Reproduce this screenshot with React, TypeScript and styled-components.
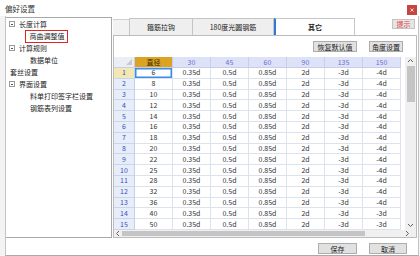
import React from 'react';
import styled, { createGlobalStyle } from 'styled-components';

const Global = createGlobalStyle`
  html, body { margin: 0; padding: 0; background: #f3f3f3; }
  body { font-family: "Noto Sans CJK SC", "Noto Sans", sans-serif; }
  * { box-sizing: border-box; }
`;

const Window = styled.div`
  width: 420px;
  height: 256px;
  display: flex;
  flex-direction: column;
  background: #f3f3f3;
  overflow: hidden;
  color: #222;
`;

const TitleBar = styled.div`
  height: 16px;
  flex: none;
  background: #fff;
  display: flex;
  align-items: flex-start;
  justify-content: space-between;
  padding: 4px 3px 0 5px;
`;

const Title = styled.span`
  font-size: 7.5px;
  line-height: 10px;
  color: #333;
`;

const CloseBtn = styled.div`
  width: 10px;
  height: 10px;
  margin-top: 1px;
  background: #c8443e;
  display: flex;
  align-items: center;
  justify-content: center;
`;

const Main = styled.div`
  flex: 1;
  margin: 0 1px 0 5px;
  background: #fff;
  border-left: 1px solid #c3c3c3;
  border-right: 1px solid #c3c3c3;
  border-bottom: 1px solid #a9a9a9;
  display: flex;
  flex-direction: column;
`;

const Body = styled.div`
  height: 222px;
  flex: none;
  display: flex;
  gap: 1px;
`;

const Tree = styled.div`
  width: 106px;
  height: 221px;
  margin-top: 1px;
  border: 1px solid #a8a8a8;
  border-left: none;
  background: #fff;
  padding-top: 0px;
  display: flex;
  flex-direction: column;
`;

const TreeRow = styled.div<{ $indent: number }>`
  height: 12px;
  display: flex;
  align-items: center;
  gap: 4px;
  padding-left: ${(p) => p.$indent}px;
  font-size: 7px;
  line-height: 12px;
  color: #222;
  white-space: nowrap;
`;

const Expander = styled.span`
  width: 6px;
  height: 6px;
  border: 1px solid #9a9a9a;
  position: relative;
  flex: none;
  &::after {
    content: '';
    position: absolute;
    left: 1px;
    right: 1px;
    top: 1.5px;
    height: 1px;
    background: #555;
  }
`;

const Highlight = styled.span`
  border: 1.5px solid #e3231d;
  padding: 0 2px 0 3.5px;
  margin-left: -5px;
  line-height: 10px;
  height: 13px;
  display: inline-flex;
  align-items: center;
`;

const RightCol = styled.div`
  width: 305px;
  display: flex;
  flex-direction: column;
  padding-top: 2px;
`;

const TabStrip = styled.div`
  height: 17px;
  flex: none;
  display: flex;
`;

const TabSpacer = styled.div`
  width: 17px;
  margin-top: 1px;
  background: #f2f2f2;
  border-top: 1px solid #d0d0d0;
`;

const Tab = styled.div<{ $w: number; $active?: boolean }>`
  width: ${(p) => p.$w}px;
  display: flex;
  align-items: center;
  justify-content: center;
  font-size: 7px;
  font-weight: ${(p) => (p.$active ? 700 : 400)};
  color: #222;
  background: ${(p) => (p.$active ? '#fff' : '#efefef')};
  border-top: 1px solid #c5c5c5;
  border-right: 1px solid #c5c5c5;
  border-left: ${(p) => (p.$active ? '2px solid #2d7bd8' : '1px solid #c5c5c5')};
  margin-left: ${(p) => (p.$active ? 0 : -1)}px;
`;

const HintBtn = styled.div`
  margin-left: auto;
  margin-right: 3px;
  margin-top: 1px;
  width: 23px;
  height: 10px;
  background: #e5e5e5;
  border: 1px solid #c4c4c4;
  color: #e23a36;
  font-size: 7px;
  display: flex;
  align-items: center;
  justify-content: center;
`;

const Content = styled.div`
  height: 203px;
  margin-right: 1px;
  border: 1px solid #bcbcbc;
  background: #fff;
  display: flex;
  flex-direction: column;
`;

const ButtonRow = styled.div`
  height: 21px;
  flex: none;
  display: flex;
  justify-content: flex-end;
  gap: 12px;
  padding: 5px 13px 0 0;
`;

const Button = styled.div<{ $w: number }>`
  width: ${(p) => p.$w}px;
  height: 11px;
  background: #e1e1e1;
  border: 1px solid #adadad;
  font-size: 7px;
  color: #222;
  display: flex;
  align-items: center;
  justify-content: center;
`;

const GridArea = styled.div`
  flex: 1;
  display: grid;
  grid-template-columns: 1fr 11px;
  grid-template-rows: 173px 7px;
`;

const Table = styled.div`
  display: grid;
  grid-template-columns: 21px repeat(7, 38px);
  grid-template-rows: 11px;
  grid-auto-rows: 10.8px;
  overflow: hidden;
  align-content: start;
`;

type Kind = 'corner' | 'head' | 'headSel' | 'rowHead' | 'rowHeadSel' | 'cell' | 'cellSel';

const Cell = styled.div<{ $kind: Kind }>`
  position: relative;
  display: flex;
  align-items: center;
  justify-content: center;
  font-size: 7px;
  line-height: 1;
  white-space: nowrap;
  border-right: 1px solid
    ${(p) => (p.$kind.startsWith('rowHead') ? '#c3d0e8' : p.$kind.startsWith('head') || p.$kind === 'corner' ? '#c9cdea' : '#dce2ee')};
  border-bottom: 1px solid
    ${(p) => (p.$kind.startsWith('rowHead') ? '#c9d5ec' : p.$kind.startsWith('head') || p.$kind === 'corner' ? '#c9cdea' : '#dce2ee')};
  background: ${(p) =>
    ({
      corner: '#eceef5',
      head: '#dee2f8',
      headSel: '#dba321',
      rowHead: '#e7eef9',
      rowHeadSel: '#f3e7b3',
      cell: '#fff',
      cellSel: '#fff',
    })[p.$kind]};
  color: ${(p) =>
    ({
      corner: '#333',
      head: '#6a6fd2',
      headSel: '#3a2a00',
      rowHead: '#3f4cb8',
      rowHeadSel: '#3f4cb8',
      cell: '#333',
      cellSel: '#333',
    })[p.$kind]};
  box-shadow: ${(p) => (p.$kind === 'cellSel' ? 'inset 0 0 0 1.5px #3a8ee6' : 'none')};
  &::after {
    content: '';
    display: ${(p) => (p.$kind === 'corner' ? 'block' : 'none')};
    position: absolute;
    right: 2px;
    bottom: 2px;
    width: 0;
    height: 0;
    border-left: 6px solid transparent;
    border-bottom: 6px solid #c6c9d2;
  }
`;

const VScroll = styled.div`
  background: #f0f0f0;
  display: flex;
  flex-direction: column;
  align-items: center;
`;

const Arrow = styled.div<{ $w: number; $h: number }>`
  width: ${(p) => p.$w}px;
  height: ${(p) => p.$h}px;
  flex: none;
  display: flex;
  align-items: center;
  justify-content: center;
`;

const VThumb = styled.div`
  width: 8px;
  height: 36px;
  background: #c4c4c4;
`;

const Spacer = styled.div`
  flex: 1;
`;

const HScroll = styled.div`
  grid-column: 1 / 3;
  background: #f0f0f0;
  display: flex;
  align-items: center;
  padding-right: 5px;
`;

const HThumb = styled.div`
  width: 243px;
  height: 5px;
  background: #c4c4c4;
`;

const Footer = styled.div`
  flex: 1;
  display: flex;
  justify-content: flex-end;
  align-items: flex-start;
  gap: 12px;
  padding: 5px 11px 0 0;
`;

const Chevron = ({ dir }: { dir: 'up' | 'down' | 'left' | 'right' }) => {
  const pts = {
    up: '1,4 3.5,1.5 6,4',
    down: '1,2 3.5,4.5 6,2',
    left: '4,1 1.5,3.5 4,6',
    right: '2,1 4.5,3.5 2,6',
  }[dir];
  return (
    <svg width="7" height="7" viewBox="0 0 7 7">
      <polyline points={pts} fill="none" stroke="#606060" strokeWidth="1" />
    </svg>
  );
};

const diams = [6, 8, 10, 12, 14, 16, 18, 20, 22, 25, 28, 32, 36, 40, 50];
const heads = ['30', '45', '60', '90', '135', '150'];

export default function App() {
  return (
    <>
      <Global />
      <Window>
        <TitleBar>
          <Title>偏好设置</Title>
          <CloseBtn>
            <svg width="4" height="4" viewBox="0 0 4 4">
              <path d="M0.5 0.5 L3.5 3.5 M3.5 0.5 L0.5 3.5" stroke="#fff" strokeWidth="0.8" />
            </svg>
          </CloseBtn>
        </TitleBar>
        <Main>
          <Body>
            <Tree>
              <TreeRow $indent={3}>
                <Expander />
                长度计算
              </TreeRow>
              <TreeRow $indent={24}>
                <Highlight>商曲调整值</Highlight>
              </TreeRow>
              <TreeRow $indent={3}>
                <Expander />
                计算规则
              </TreeRow>
              <TreeRow $indent={24}>数据单位</TreeRow>
              <TreeRow $indent={4}>套丝设置</TreeRow>
              <TreeRow $indent={3}>
                <Expander />
                界面设置
              </TreeRow>
              <TreeRow $indent={24}>料单打印签字栏设置</TreeRow>
              <TreeRow $indent={24}>钢筋表列设置</TreeRow>
            </Tree>
            <RightCol>
              <TabStrip>
                <TabSpacer />
                <Tab $w={64}>箍筋拉钩</Tab>
                <Tab $w={82}>180度光圆钢筋</Tab>
                <Tab $w={81} $active>
                  其它
                </Tab>
                <HintBtn>提示</HintBtn>
              </TabStrip>
              <Content>
                <ButtonRow>
                  <Button $w={44}>恢复默认值</Button>
                  <Button $w={34}>角度设置</Button>
                </ButtonRow>
                <GridArea>
                  <Table>
                    <Cell $kind="corner" />
                    <Cell $kind="headSel">直径</Cell>
                    {heads.map((h) => (
                      <Cell key={h} $kind="head">
                        {h}
                      </Cell>
                    ))}
                    {diams.map((d, i) => {
                      const vals = ['0.35d', '0.5d', '0.85d', '2d', '-3d', i >= 13 ? '-3d' : '-4d'];
                      return (
                        <React.Fragment key={d}>
                          <Cell $kind={i === 0 ? 'rowHeadSel' : 'rowHead'}>{i + 1}</Cell>
                          <Cell $kind={i === 0 ? 'cellSel' : 'cell'}>{d}</Cell>
                          {vals.map((v, j) => (
                            <Cell key={j} $kind="cell">
                              {v}
                            </Cell>
                          ))}
                        </React.Fragment>
                      );
                    })}
                  </Table>
                  <VScroll>
                    <Arrow $w={11} $h={9}>
                      <Chevron dir="up" />
                    </Arrow>
                    <VThumb />
                    <Spacer />
                    <Arrow $w={11} $h={9}>
                      <Chevron dir="down" />
                    </Arrow>
                  </VScroll>
                  <HScroll>
                    <Arrow $w={8} $h={7}>
                      <Chevron dir="left" />
                    </Arrow>
                    <HThumb />
                    <Spacer />
                    <Arrow $w={8} $h={7}>
                      <Chevron dir="right" />
                    </Arrow>
                  </HScroll>
                </GridArea>
              </Content>
            </RightCol>
          </Body>
          <Footer>
            <Button $w={39}>保存</Button>
            <Button $w={38}>取消</Button>
          </Footer>
        </Main>
      </Window>
    </>
  );
}
